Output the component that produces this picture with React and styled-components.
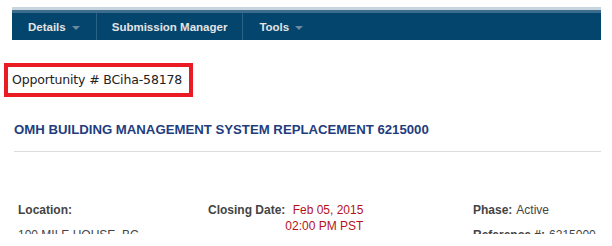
import styled, { createGlobalStyle } from "styled-components";

const Global = createGlobalStyle`
  body{
    margin: 0;
    background: #fff;
    font-family: "Liberation Sans", Arial, sans-serif;
  }
`
const Page = styled.div`
  width: 612px;
  height: 234px;
  overflow: hidden;
`
const Nav = styled.nav`
  margin: 7px 11px 0 12px;
  height: 27px;
  display: flex;
  background: #03456d;
  border-top: 3px solid #c7d5df;
  box-shadow: inset 0 3px 0 #3d6c8c;
  padding-top: 3px;
`
const NavItem = styled.div`
  display: flex;
  align-items: center;
  gap: 6px;
  padding: 0 ${props=>props.$pad || "16px"};
  border-right: ${props=>props.$last? "none" : "1px solid #2c6187"};
  color: #e4e4e4;
  font-size: 11.5px;
  font-weight: 700;
`
const Caret = styled.span`
  width: 0;
  height: 0;
  margin-top: 2px;
  border-left: 4px solid transparent;
  border-right: 4px solid transparent;
  border-top: 4px solid #6b8aa1;
`
const OppBox = styled.div`
  display: inline-block;
  margin: 23px 0 0 4px;
  padding: 4px 7px 4px 4px;
  border: 4px solid #e91c24;
  font-family: "DejaVu Sans", Tahoma, sans-serif;
  font-size: 12.5px;
  line-height: 18px;
  color: #222;
  letter-spacing: -0.15px;
`
const Title = styled.h2`
  margin: 25px 11px 0 14px;
  padding-bottom: 14px;
  border-bottom: 1px solid #dcdcdc;
  font-size: 13.2px;
  line-height: 15px;
  font-weight: 700;
  color: #1f3d7d;
`
const Details = styled.div`
  display: grid;
  grid-template-columns: 190px 265px 1fr;
  padding: 51px 0 0 18px;
  font-size: 12px;
  color: #444;
`
const Col = styled.div`
  display: flex;
  flex-direction: column;
  gap: 11px;
`
const Line = styled.div`
  display: flex;
  gap: ${props=>props.$gap || "4px"};
  line-height: 14px;
`
const Label = styled.span`
  font-weight: 700;
`
const Red = styled.span`
  color: #b5121b;
  text-align: right;
  line-height: 16px;
  margin-top: -1px;
`

function App(){
  return(
    <Page>
      <Global />
      <Nav>
        <NavItem>Details <Caret /></NavItem>
        <NavItem $pad="15px">Submission Manager</NavItem>
        <NavItem $last>Tools <Caret /></NavItem>
      </Nav>
      <OppBox>Opportunity # BCiha-58178</OppBox>
      <Title>OMH BUILDING MANAGEMENT SYSTEM REPLACEMENT 6215000</Title>
      <Details>
        <Col>
          <Label>Location:</Label>
          <span>100 MILE HOUSE, BC</span>
        </Col>
        <Col>
          <Line $gap="0px">
            <Label>Closing Date:</Label>
            <Red>Feb 05, 2015<br/>02:00 PM PST</Red>
          </Line>
        </Col>
        <Col>
          <Line><Label>Phase:</Label>Active</Line>
          <Line><Label>Reference #:</Label>6215000</Line>
        </Col>
      </Details>
    </Page>
  )
}
export default App;
